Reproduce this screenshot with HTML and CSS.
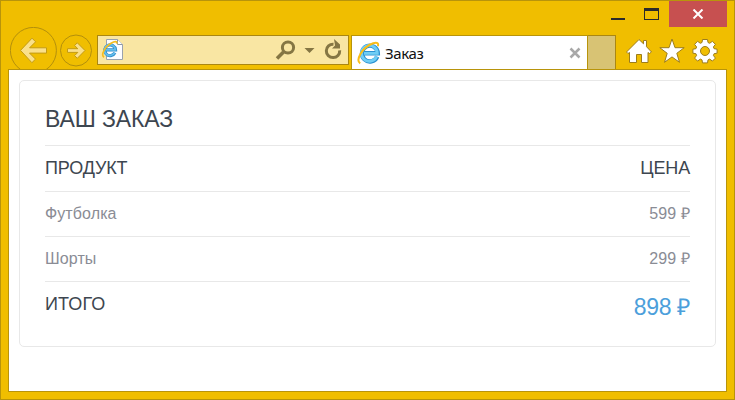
FILE: index.html
```html
<!DOCTYPE html>
<html lang="ru">
<head>
<meta charset="utf-8">
<title>Заказ</title>
<link rel="stylesheet" href="styles.css">
</head>
<body>
<div class="window">
  <header class="titlebar">
    <svg class="controls" width="58" height="26" viewBox="0 0 58 26">
      <path d="M0 17h14v2H0z" fill="#2b2b2b"/>
      <path fill-rule="evenodd" d="M33 7h15v12H33zm1 3v8h13v-8z" fill="#2b2b2b"/>
    </svg>
    <div class="close">
      <svg width="12" height="10" viewBox="0 0 12 10"><path d="M1.5.5l9 9M10.500.5l-9 9" stroke="#fff" stroke-width="2"/></svg>
    </div>
  </header>
  <nav class="toolbar">
    <svg class="back" width="48" height="42" viewBox="0 0 48 42">
      <circle cx="23.400" cy="23.400" r="23" fill="none" stroke="#b38f0c"/>
      <path d="M10.500 23.400L22 11.200l3.600 3.600-6 6H36.500v5.300h-17l6 6-3.600 3.600z" fill="#fae08a" stroke="#c39b12"/>
    </svg>
    <svg class="forward" width="32" height="34" viewBox="0 0 32 34">
      <circle cx="16" cy="15.500" r="15.500" fill="none" stroke="#b38f0c"/>
      <path d="M25 15.500L17.300 7.800l-2.700 2.700 3.200 3.200H7.500v3.700h10.300l-3.200 3.200 2.700 2.700z" fill="#fae08a" stroke="#c39b12"/>
    </svg>
    <div class="address">
      <svg width="23" height="24" viewBox="0 0 23 24">
        <path d="M5.500 1.500h11l5 5v15h-16z" fill="#fdfdff" stroke="#9aa2ad"/>
        <path d="M16.500 1.500v5h5" fill="#fff" stroke="#8d98a6"/>
        <path d="M13.900 14.800a5.400 5.400 0 1 1 .6-3H5" fill="none" stroke="#2f8ecb" stroke-width="3.200"/>
        <path d="M13.700 14.600a5.400 5.400 0 1 1 .6-2.800H5" fill="none" stroke="#64bdec" stroke-width="1.800"/>
        <path d="M3 19.300C-.5 17 4 7.500 12.500 4c2.700-1 3.700-.1 3 1.600" fill="none" stroke="#f6bd20" stroke-width="1.700"/>
      </svg>
      <svg class="tools" width="68" height="24" viewBox="0 0 68 24">
        <g fill="none" stroke="#857643" stroke-width="3">
          <circle cx="13" cy="9.500" r="5.600"/>
          <path d="M8.500 14L2 20.500" stroke-width="3.600"/>
          <path d="M58.500 6.200a6.700 6.700 0 1 0 6.200 6.200"/>
        </g>
        <path d="M29.500 10h10l-5 5zM59 1l6 5.500v4H57l3-3z" fill="#857643"/>
      </svg>
    </div>
    <div class="tab">
      <svg width="24" height="24" viewBox="0 0 24 24">
        <path d="M20.200 15.600a7.900 7.900 0 1 1 .6-3.300H7" fill="none" stroke="#2a91d2" stroke-width="4.400"/>
        <path d="M19.700 15.400a7.900 7.900 0 1 1 .6-3.100H7" fill="none" stroke="#6fcdf5" stroke-width="2.800"/>
        <path d="M3.200 22.400C-1.500 19.500 4.500 6.500 16.200 2.300c4-1.300 5.600 0 4.700 2.800" fill="none" stroke="#f9bd18" stroke-width="2"/>
      </svg>
      <span class="tab-title">Заказ</span>
      <svg class="tab-close" width="12" height="12" viewBox="0 0 12 12"><path d="M1.500 1.500l9 9M10.500 1.500l-9 9" stroke="#a8a8a8" stroke-width="2.500"/></svg>
    </div>
    <div class="new-tab"></div>
    <svg class="actions" width="92" height="34" viewBox="0 0 92 34">
      <g fill="#fff" stroke="#9c7d1c" stroke-width="1" stroke-linejoin="round">
        <path d="M13 4.500l4.500 4.300V5.500h3v6.200L25.500 17l-2 1.500-1.500-1v10h-6.500v-8h-5v8H3.500v-10L2 18.500.500 17z"/>
        <path d="M46 4l3 8.700h9.200l-7.400 5.600 2.700 9-7.500-5.400-7.500 5.400 2.700-9-7.400-5.600H43z"/>
        <path fill-rule="evenodd" d="M76.500 4.500h5l.5 3 1.700.8 2.700-2 3 3-2 2.700.7 1.700 3 .5v4l-3 .5-.7 1.700 2 2.700-3 3-2.700-2-1.700.8-.5 3h-5l-.5-3-1.700-.8-2.700 2-3-3 2-2.700-.7-1.700-3-.5v-4l3-.5.7-1.700-2-2.700 3-3 2.700 2 1.700-.8zM79 11.500a4.500 4.500 0 1 0 0 9 4.500 4.500 0 1 0 0-9z"/>
      </g>
    </svg>
  </nav>
  <main class="page">
    <section class="order">
      <h1 class="order-title">ВАШ ЗАКАЗ</h1>
      <div class="row head"><span>ПРОДУКТ</span><span>ЦЕНА</span></div>
      <div class="row"><span>Футболка</span><span class="price">599 ₽</span></div>
      <div class="row"><span>Шорты</span><span class="price">299 ₽</span></div>
      <div class="row total"><span>ИТОГО</span><span class="sum">898 ₽</span></div>
    </section>
  </main>
</div>
</body>
</html>
```
FILE: styles.css
```css
* { box-sizing: border-box; }
body { margin: 0; font-family: "Liberation Sans", Arial, sans-serif; }
svg { display: block; flex: none; }
.window {
  display: flex;
  flex-direction: column;
  width: 735px;
  height: 400px;
  padding: 0 7px 7px;
  background: #f0be00;
  border: 1px solid #b8940b;
}
.titlebar { display: flex; justify-content: flex-end; height: 34px; flex: none; }
.close {
  display: flex;
  align-items: center;
  justify-content: center;
  width: 58px;
  height: 26px;
  background: #c75050;
}
.toolbar { display: flex; align-items: flex-end; height: 34px; flex: none; padding-left: 2px; }
.back { margin-top: -8px; }
.forward { margin-left: 2px; overflow: visible; }
.address {
  display: flex;
  align-items: center;
  justify-content: space-between;
  align-self: flex-start;
  width: 252px;
  height: 30px;
  margin-left: 5px;
  padding: 0 5px 0 3px;
  background: #f9e6a3;
  border: 1px solid #aa8712;
}
.tab {
  display: flex;
  align-items: center;
  width: 237px;
  height: 34px;
  margin-left: 2px;
  padding: 0 6px 0 5px;
  background: #fff;
  border: 1px solid #b8940b;
  border-bottom: 0;
}
.tab-title { margin-left: 4px; font: 15px/20px "Noto Sans", sans-serif; letter-spacing: -0.4px; color: #111; }
.tab-close { margin-left: auto; }
.new-tab { width: 28px; height: 34px; background: #d8c374; border: 1px solid #aa8712; border-width: 1px 1px 0 0; }
.actions { margin-left: 10px; }
.page {
  flex: 1;
  padding: 10px;
  background: #fff;
  border: 1px solid #b8940b;
}
.order {
  height: 267px;
  padding: 0 25px;
  border: 1px solid #e8e8e8;
  border-radius: 5px;
  color: #3d4650;
}
.order-title { height: 64px; margin: 0; padding-top: 24px; font-size: 23px; line-height: 28px; font-weight: 400; letter-spacing: -0.1px; }
.row {
  display: flex;
  align-items: center;
  justify-content: space-between;
  height: 45px;
  border-top: 1px solid #e8e8e8;
  font-size: 16px;
  line-height: 18px;
  letter-spacing: 0.1px;
  color: #8a8c95;
}
.head { height: 46px; padding-bottom: 2px; font-size: 18px; letter-spacing: -0.15px; color: #3d4650; }
.total { height: 50px; font-size: 18px; color: #3d4650; }
.total span:first-child { margin-top: -5px; }
.total .sum { font-size: 23px; letter-spacing: -0.3px; color: #4c9fdb; }
```
